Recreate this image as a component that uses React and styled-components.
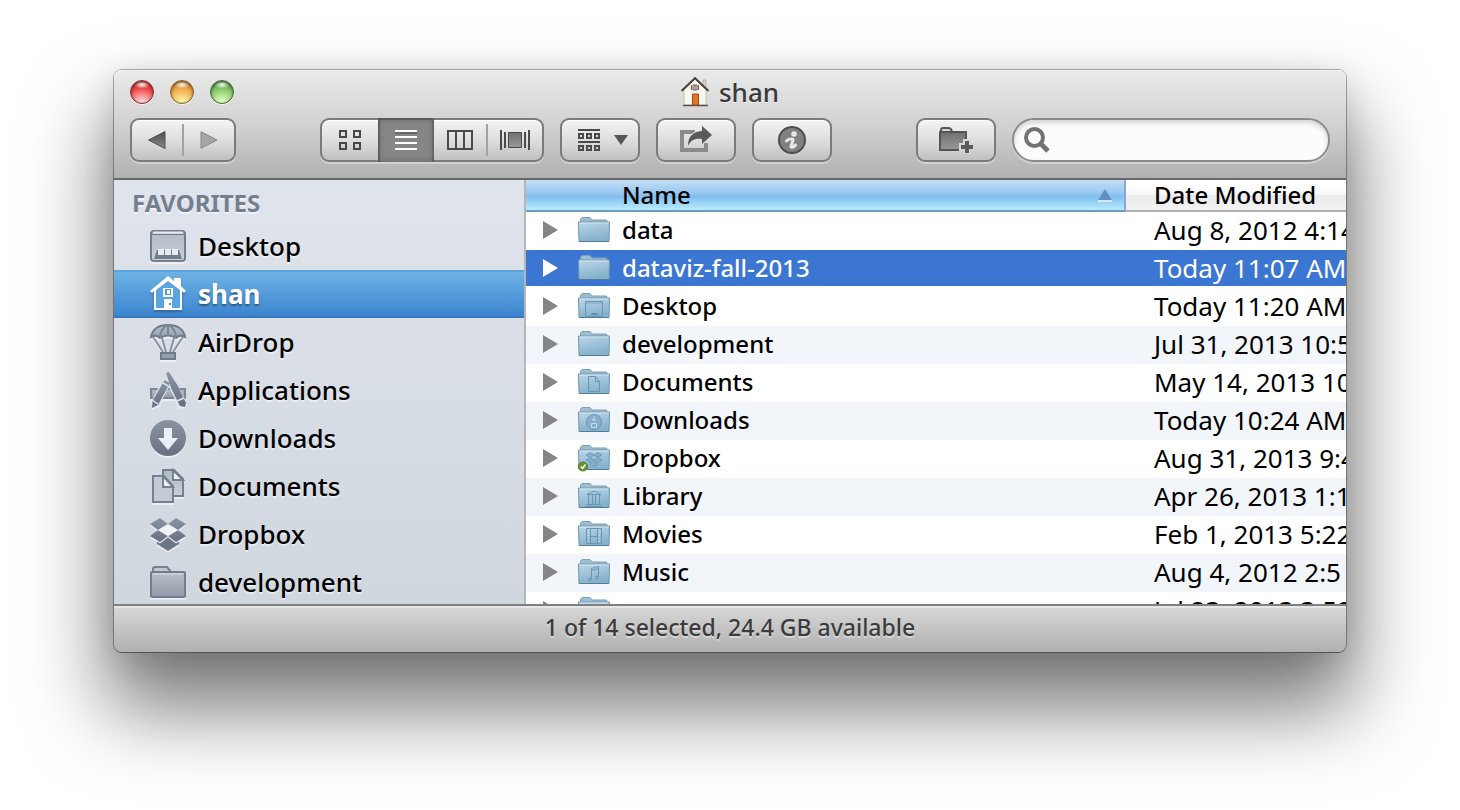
import React from "react";
import styled, { createGlobalStyle, css } from "styled-components";

const GlobalStyle = createGlobalStyle`
  *, *::before, *::after { box-sizing: border-box; }
  body {
    margin: 0;
    background: #fff;
    color: #000;
    font-family: "Noto Sans", "Open Sans", sans-serif;
    font-weight: 500;
  }
  button, input { font: inherit; color: inherit; }
  svg { display: block; flex: none; overflow: visible; }
`;

/* ---------- window ---------- */

const Desktop = styled.main`
  display: flex;
  flex-direction: column;
  height: 100vh;
  min-height: 480px;
  padding: 70px 114px 158px;
  overflow: hidden;
`;

const FinderWindow = styled.section`
  flex: 1;
  min-height: 0;
  display: flex;
  flex-direction: column;
  border-radius: 8px;
  box-shadow:
    0 0 0 1px rgba(0, 0, 0, 0.3),
    0 6px 30px rgba(0, 0, 0, 0.12),
    0 50px 80px 8px rgba(0, 0, 0, 0.52);
`;

const Header = styled.header`
  padding: 0 16px 16px;
  border-bottom: 2px solid #686868;
  border-radius: 8px 8px 0 0;
  background: linear-gradient(#eaeaea, #cfcfcf 55%, #b1b1b1);
  box-shadow: inset 0 1px 0 #f6f6f6;
`;

const TitleBar = styled.div`
  display: grid;
  grid-template-columns: 1fr auto 1fr;
  align-items: center;
  height: 44px;
  margin-bottom: 4px;
`;

const Lights = styled.div`
  display: flex;
  gap: 16px;
`;

const lightColors = {
  red: css`
    border-color: #8c2a2e;
    background: radial-gradient(ellipse 8px 4px at 50% 16%, #fff, transparent),
      radial-gradient(circle at 50% 105%, #ffd9d9 10%, #f04848 62%, #a5292d 100%);
  `,
  yellow: css`
    border-color: #8c6020;
    background: radial-gradient(ellipse 8px 4px at 50% 16%, #fff, transparent),
      radial-gradient(circle at 50% 105%, #fff7a8 10%, #f0a848 62%, #a86a20 100%);
  `,
  green: css`
    border-color: #3e6e2c;
    background: radial-gradient(ellipse 8px 4px at 50% 16%, #fff, transparent),
      radial-gradient(circle at 50% 105%, #e6ffc0 10%, #82c566 62%, #437c34 100%);
  `,
};

const Light = styled.button`
  width: 24px;
  height: 24px;
  padding: 0;
  border: 1px solid;
  border-radius: 50%;
  box-shadow: inset 0 1px 3px rgba(0, 0, 0, 0.5), 0 1px 0 rgba(255, 255, 255, 0.6);
  ${(p) => lightColors[p.$color]}
`;

const Title = styled.h1`
  display: flex;
  align-items: center;
  gap: 10px;
  margin: 0;
  font-size: 26px;
  line-height: 42px;
  font-weight: 500;
  color: #3a3a3a;
  text-shadow: 0 1px 0 rgba(255, 255, 255, 0.6);
`;

/* ---------- toolbar ---------- */

const Toolbar = styled.div`
  display: flex;
  align-items: center;
  gap: 16px;
`;

const Spacer = styled.div`
  flex: 1;
  margin: 0 -8px;
`;

const raised = css`
  height: 44px;
  border: 2px solid #7b7b7b;
  border-radius: 9px;
  background: linear-gradient(#f4f4f4, #dedede 50%, #c0c0c0);
  box-shadow: 0 2px 0 rgba(255, 255, 255, 0.35), inset 0 1px 0 #fff;
`;

const ButtonGroup = styled.div`
  ${raised}
  display: flex;
  align-items: center;
`;

const GroupButton = styled.button`
  display: flex;
  align-items: center;
  justify-content: center;
  width: ${(p) => p.$width}px;
  height: 40px;
  padding: 0;
  border: 0;
  background: none;
  ${(p) =>
    p.$active &&
    css`
      height: 44px;
      background: #868686;
      box-shadow: inset 0 0 6px rgba(0, 0, 0, 0.3), inset 2px 0 0 #6c6c6c,
        inset -2px 0 0 #747474, inset 0 2px 0 #666;
    `}
`;

const Divider = styled.span`
  width: 2px;
  height: 32px;
  background: #a2a2a2;
`;

const ToolButton = styled.button`
  ${raised}
  display: flex;
  align-items: center;
  justify-content: center;
  gap: 14px;
  width: 80px;
  padding: 0;
  ${(p) => p.$menu && css`padding-left: 6px;`}
`;

const SearchBox = styled.label`
  display: flex;
  align-items: center;
  gap: 8px;
  width: 318px;
  height: 44px;
  padding: 0 16px 0 10px;
  border: 2px solid #8b8b8b;
  border-radius: 22px;
  background: #fcfcfc;
  box-shadow: inset 0 3px 5px rgba(0, 0, 0, 0.16), 0 2px 0 rgba(255, 255, 255, 0.35);
`;

const SearchInput = styled.input`
  flex: 1;
  min-width: 0;
  height: 32px;
  padding: 0;
  border: 0;
  outline: 0;
  background: transparent;
  font-size: 24px;
`;

/* ---------- panes ---------- */

const Panes = styled.div`
  flex: 1;
  min-height: 0;
  display: grid;
  grid-template-columns: 412px minmax(0, 1fr);
  grid-template-rows: minmax(0, 1fr);
`;

const Sidebar = styled.nav`
  overflow: hidden;
  border-right: 2px solid #b4b6b9;
  background: linear-gradient(#e0e4ec, #d0d7df);
`;

const SidebarHeading = styled.h2`
  margin: 0;
  padding: 4px 18px 0;
  font-size: 24px;
  line-height: 38px;
  font-weight: 700;
  color: #73808f;
  text-shadow: 0 2px 0 rgba(255, 255, 255, 0.6);
`;

const PlaceList = styled.ul`
  margin: 0;
  padding: 0;
  list-style: none;
`;

const Place = styled.a`
  display: flex;
  align-items: center;
  gap: 12px;
  height: 48px;
  padding: 0 36px;
  font-size: 26px;
  line-height: 48px;
  color: #000;
  text-decoration: none;
  text-shadow: 0 2px 0 rgba(255, 255, 255, 0.5);
  svg { filter: drop-shadow(0 2px 0 rgba(255, 255, 255, 0.5)); }
  ${(p) =>
    p.$selected &&
    css`
      color: #fff;
      font-weight: 700;
      text-shadow: 0 2px 2px rgba(0, 0, 0, 0.4);
      background: linear-gradient(#70b4e6, #3a83cd);
      box-shadow: inset 0 2px 0 #5ba3dc, inset 0 -2px 0 #3778c0;
      svg { filter: drop-shadow(0 2px 1px rgba(0, 0, 0, 0.25)); }
    `}
`;

const ListPane = styled.div`
  overflow: hidden;
  background: #fff;
`;

const FileTable = styled.table`
  width: 100%;
  table-layout: fixed;
  border-collapse: separate;
  border-spacing: 0;
  font-size: 24px;
  line-height: 36px;
  white-space: nowrap;
`;

const HeadCell = styled.th`
  height: 32px;
  padding: 0 12px 0 28px;
  border-bottom: 2px solid #b0b0b0;
  background: linear-gradient(#fff 20%, #f6f6f6 48%, #ebebeb 50%, #f2f2f2);
  font-weight: 500;
  line-height: 30px;
  text-align: left;
  ${(p) =>
    p.$sorted &&
    css`
      padding-left: 96px;
      border-bottom-color: #6c9cba;
      border-right: 2px solid #8ba5dc;
      background: linear-gradient(#c5def5, #92c5f0 48%, #80bdf0 54%, #b9ecfd);
    `}
  ${(p) => p.$date && css`width: 220px;`}
`;

const HeadLabel = styled.div`
  display: flex;
  align-items: center;
  justify-content: space-between;
`;

const Cell = styled.td`
  padding: 0;
  border-bottom: 2px solid transparent;
`;

const DateCell = styled(Cell)`
  padding-left: 28px;
  overflow: hidden;
  font-size: 26px;
  font-weight: 400;
`;

const Row = styled.tr`
  height: 38px;
  &:nth-child(even) { background: #f2f6fb; }
  ${(p) =>
    p.$selected &&
    css`
      && { background: #3c76d3; }
      color: #fff;
      ${Cell} { border-bottom-color: #fff; }
    `}
`;

const NameLine = styled.div`
  display: flex;
  align-items: center;
  height: 36px;
  padding-left: 17px;
`;

const Disclosure = styled.button`
  margin: 0 20px 0 0;
  padding: 0;
  border: 0;
  background: none;
  color: ${(p) => (p.$selected ? "#fff" : "#858585")};
`;

const FileName = styled.span`
  margin-left: 12px;
  line-height: 38px;
`;

const StatusBar = styled.footer`
  height: 48px;
  padding-bottom: 4px;
  border-top: 2px solid #808080;
  border-radius: 0 0 8px 8px;
  background: linear-gradient(#d8d8d8, #b0b0b0);
  box-shadow: inset 0 2px 0 #e6e6e6, 0 1px 0 #555;
  font-size: 23px;
  line-height: 42px;
  text-align: center;
  color: #3c3c3c;
  text-shadow: 0 2px 0 rgba(255, 255, 255, 0.4);
`;

/* ---------- toolbar icons ---------- */

const Gradients = () => (
  <svg width="0" height="0" style={{ position: "absolute" }} aria-hidden="true">
    <defs>
      <linearGradient id="dark" x1="0" y1="0" x2="0" y2="1">
        <stop offset="0" stopColor="#4a4a4a" />
        <stop offset="1" stopColor="#8b8b8b" />
      </linearGradient>
      <linearGradient id="steel" x1="0" y1="0" x2="0" y2="1">
        <stop offset="0" stopColor="#707070" />
        <stop offset="1" stopColor="#989898" />
      </linearGradient>
      <linearGradient id="slate" x1="0" y1="0" x2="0" y2="1">
        <stop offset="0" stopColor="#8b95a2" />
        <stop offset="1" stopColor="#667080" />
      </linearGradient>
      <linearGradient id="slateFill" x1="0" y1="0" x2="0" y2="1">
        <stop offset="0" stopColor="#b9c0cb" />
        <stop offset="1" stopColor="#939ba8" />
      </linearGradient>
      <linearGradient id="paper" x1="0" y1="0" x2="0" y2="1">
        <stop offset="0" stopColor="#b2b9c4" />
        <stop offset="1" stopColor="#cbd1da" />
      </linearGradient>
      <linearGradient id="folder" x1="0" y1="0" x2="0.3" y2="1">
        <stop offset="0" stopColor="#bcd6e7" />
        <stop offset="1" stopColor="#84b1cc" />
      </linearGradient>
    </defs>
  </svg>
);

const HouseIcon = () => (
  <svg width="28" height="30" viewBox="0 0 28 30">
    <path d="M22 3h3v8l-3-3z" fill="#d8d4c8" stroke="#b5b2a6" />
    <path d="M3 12 14 2l11 10v16H3z" fill="#faf7ef" stroke="#c8c3b5" />
    <path d="M.5 14 14 1.200 27.500 14" fill="none" stroke="#4a4038" strokeWidth="2" />
    <path d="M2 28.500h25" stroke="#55504c" strokeWidth="1.500" />
    <path d="M11.500 17h6v11h-6z" fill="#e0762a" stroke="#a04c16" />
    <path d="M12 8h4v5h-4z" fill="#cfd9e2" stroke="#666" />
    <path d="M14 8v5" stroke="#666" />
    <path d="M10.500 8v5M17.500 8v5" stroke="#b13c2c" />
  </svg>
);

const BackIcon = () => (
  <svg width="18" height="18" viewBox="0 0 18 18">
    <path d="M.5 9 17 .5v17z" fill="url(#dark)" stroke="#505050" />
  </svg>
);

const ForwardIcon = () => (
  <svg width="18" height="18" viewBox="0 0 18 18">
    <path d="M17 9 1 .8v16.400z" fill="#a6a6a6" stroke="#858585" />
  </svg>
);

const IconViewIcon = () => (
  <svg width="22" height="20" viewBox="0 0 22 20" fill="none" stroke="#484848" strokeWidth="2">
    <path d="M1 1h6v6H1zM15 1h6v6h-6zM1 13h6v6H1zM15 13h6v6h-6z" />
  </svg>
);

const ListViewIcon = () => (
  <svg width="22" height="20" viewBox="0 0 22 20" stroke="#fff" strokeWidth="2">
    <path d="M0 3h22" stroke="#666" />
    <path d="M0 1h22M0 7h22M0 13h22M0 19h22" />
  </svg>
);

const ColumnViewIcon = () => (
  <svg width="26" height="20" viewBox="0 0 26 20" fill="none" stroke="#4a4a4a" strokeWidth="2">
    <path d="M1 1h24v18H1zM9 1v18M17 1v18" />
  </svg>
);

const CoverViewIcon = () => (
  <svg width="30" height="20" viewBox="0 0 30 20">
    <path d="M1 0v20M5 2v16M25 2v16M29 0v20" stroke="#4a4a4a" strokeWidth="2" />
    <path d="M8.500 2.500h13v15h-13z" fill="url(#steel)" stroke="#484848" />
  </svg>
);

const ArrangeIcon = () => (
  <svg width="22" height="22" viewBox="0 0 22 22" fill="none" stroke="#4a4a4a" strokeWidth="2">
    <path d="M0 1h22M0 13h22" />
    <path d="M1 5h4v4H1zM9 5h4v4H9zM17 5h4v4h-4zM1 17h4v4H1zM9 17h4v4H9zM17 17h4v4h-4z" />
  </svg>
);

const MenuArrowIcon = () => (
  <svg width="14" height="10" viewBox="0 0 14 10">
    <path d="M0 0h14L7 10z" fill="#555" />
  </svg>
);

const ShareIcon = () => (
  <svg width="32" height="28" viewBox="0 0 32 28">
    <path d="M15 6H2v18h24v-7" fill="none" stroke="#8b8b8b" strokeWidth="4" />
    <path
      d="M8 20C8 10 13 6 22 5V0l10 9-10 9v-5C15 12 11 14 8 20z"
      fill="#5a5a5a"
      stroke="#e2e2e2"
      strokeWidth="2"
      paintOrder="stroke"
    />
  </svg>
);

const InfoIcon = () => (
  <svg width="28" height="28" viewBox="0 0 28 28">
    <circle cx="14" cy="14" r="13" fill="#818181" stroke="#4e4e4e" strokeWidth="2" />
    <circle cx="16" cy="8" r="2.800" fill="#e8e8e8" />
    <path
      d="M8.500 15c2-2 5-2.500 6.500-1.500 0 2-2 5-2 7.500 1.500.8 3 0 4.500-2"
      fill="none"
      stroke="#e8e8e8"
      strokeWidth="3"
      strokeLinecap="round"
      strokeLinejoin="round"
    />
  </svg>
);

const NewFolderIcon = () => (
  <svg width="34" height="26" viewBox="0 0 34 26">
    <path d="M2 4c0-4 2-3 5-3s5-1 6 4" fill="#d5d5d5" stroke="#555" strokeWidth="2" />
    <path d="M1 5h26v18H1z" fill="url(#steel)" stroke="#555" strokeWidth="2" />
    <path d="M28 12v15M20 20h15" stroke="#d6d6d6" strokeWidth="8" />
    <path d="M28 14v12M22 20h12" stroke="#5c5c5c" strokeWidth="4" />
  </svg>
);

const SearchIcon = () => (
  <svg width="26" height="26" viewBox="0 0 26 26" fill="none" stroke="#737373">
    <circle cx="10.500" cy="10.500" r="8.500" strokeWidth="4" />
    <path d="m16.500 16.500 7.500 7.500" strokeWidth="5" />
  </svg>
);

const SortIcon = () => (
  <svg width="14" height="12" viewBox="0 0 14 12">
    <path d="M0 12h14" stroke="#d3ecff" strokeWidth="2" />
    <path d="M7 0l7 11H0z" fill="#5b90c8" />
  </svg>
);

const TriangleIcon = () => (
  <svg width="15" height="18" viewBox="0 0 15 18">
    <path d="M0 0l15 9-15 9z" fill="currentColor" />
  </svg>
);

/* ---------- sidebar icons ---------- */

const PlaceIcon = ({ children }) => (
  <svg width="36" height="36" viewBox="0 0 36 36" aria-hidden="true">
    {children}
  </svg>
);

const placeIcons = {
  desktop: (
    <PlaceIcon>
      <rect x="1" y="3" width="34" height="30" rx="3" fill="url(#paper)" stroke="#727e8e" strokeWidth="2" />
      <path d="M2 6.500h32" stroke="#727e8e" />
      <path d="M3 4.500h30" stroke="#e9edf2" strokeWidth="2" />
      <path d="M7 22h22l3 9H4z" fill="#717c8b" />
      <path d="M8 21h6v6H8zM15 21h6v6h-6zM22 21h6v6h-6z" fill="#e9ecf1" />
    </PlaceIcon>
  ),
  home: (
    <PlaceIcon>
      <path d="M0 15 18 0l6 5V2h7v8l5 5-2 2-2-2v19H4V15l-2 2z" fill="#fff" />
      <path d="M6 14 18 5l12 9v18h-8v-9h-8v9H6z" fill="#5ba5df" />
      <path d="M13 12h10v9H13z" fill="#fff" />
      <path d="M15 13h6v6h-6z" fill="#4f98d8" />
      <path d="M17 14h3v4h-3z" fill="#fff" />
      <path d="M14 23h8v11h-8z" fill="#fff" />
      <path d="M19 27h2v2h-2z" fill="#4a94d6" />
    </PlaceIcon>
  ),
  airdrop: (
    <PlaceIcon>
      <path d="M3 13 13 28M33 13 23 28M12 14l4 14M24 14l-4 14" fill="none" stroke="#87919e" strokeWidth="2" />
      <path
        d="M1 13C2 5 9 1 18 1s16 4 17 12c-3-2-6-2-9 1-5-3-11-3-16 0-3-3-6-3-9-1z"
        fill="url(#slateFill)"
        stroke="#6e7988"
        strokeWidth="2"
      />
      <path d="M10 14C10 7 13 3 18 1c5 2 8 6 8 13M18 1v11" fill="none" stroke="#7b8593" strokeWidth="2" />
      <path d="M11 29h14v6H11z" fill="#97a0ad" stroke="#6e7988" strokeWidth="2" />
    </PlaceIcon>
  ),
  applications: (
    <PlaceIcon>
      <path d="M1 17h34v9H1z" fill="url(#slateFill)" stroke="#7b8593" strokeWidth="2" />
      <path d="M18 4 33 33M17 9 5 32" stroke="#dde2e9" strokeWidth="9" />
      <path d="m14.500 8 5.500 3L8 33l-6 3 .5-7z" fill="url(#slate)" />
      <path d="M16 1l3-1 9 14 8 17-1 4-5-1-9-18z" fill="url(#slate)" />
      <path d="m2 28 6 4M13 11l5 3M27 29l7-3" stroke="#e3e7ed" strokeWidth="1.500" />
    </PlaceIcon>
  ),
  downloads: (
    <PlaceIcon>
      <circle cx="18" cy="18" r="18" fill="url(#slate)" />
      <path d="M14 8h8v10h6L18 30 8 18h6z" fill="#eceff3" />
    </PlaceIcon>
  ),
  documents: (
    <PlaceIcon>
      <path d="M13 2h11l9 9v17H13z" fill="url(#paper)" stroke="#76818f" strokeWidth="2" />
      <path d="M23 2v10h10z" fill="#f0f2f5" stroke="#76818f" strokeWidth="2" />
      <path d="M3 8h11l9 10v16H3z" fill="#c5cbd4" stroke="#76818f" strokeWidth="2" />
      <path d="M13 8v11h10z" fill="#f0f2f5" stroke="#76818f" strokeWidth="2" />
    </PlaceIcon>
  ),
  dropbox: (
    <PlaceIcon>
      <path d="M10 2 18 8 8 14 0 8zM26 2 18 8l10 6 8-6zM8 14l10 6-8 6-10-6zM28 14l-10 6 8 6 10-6z" fill="url(#slate)" />
      <path d="M7 25.500 10 27.500 18 21.500 26 27.500 29 25.500V28L18 35 7 28z" fill="#6b7685" />
      <path d="m18 8 10 6-10 6-10-6z" fill="#eef1f5" />
    </PlaceIcon>
  ),
  folder: (
    <PlaceIcon>
      <path d="M3 9V5c0-2 1-2 2-2h12l5 6" fill="#c3c9d3" stroke="#76818f" strokeWidth="2" />
      <rect x="1" y="8" width="34" height="25" rx="1" fill="url(#slateFill)" stroke="#737e8d" strokeWidth="2" />
      <path d="M3 10h30" stroke="#cbd1da" strokeWidth="2" />
    </PlaceIcon>
  ),
};

/* ---------- file list icons ---------- */

const emblems = {
  desktop: (
    <g>
      <path d="M7.500 8.500h17v15h-17z" />
      <path d="M8 10h16" stroke="#7ea8c4" />
      <path d="M12 22l2-2h5l2 2z" fill="#5e8fb3" stroke="none" />
    </g>
  ),
  documents: <path d="M10.500 7.500h7l4 5v10h-11zM17.500 7.500v5h4" />,
  downloads: (
    <g>
      <circle cx="16" cy="15" r="7.500" fill="#86aecb" />
      <path d="M16 9v5M14 12l2 2 2-2M13.500 16.500h5v4h-5z" stroke="#c3dcec" />
    </g>
  ),
  dropbox: (
    <g>
      <path
        d="M12 7.500l4 2.500-4 2.500L8 10zM20 7.500l4 2.500-4 2.500-4-2.500zM12 12.500l4 2.500-4 2.500L8 15zM20 12.500l4 2.500-4 2.500-4-2.500zM12 19l4-2 4 2-4 3z"
        fill="#86afcb"
        stroke="#709cba"
      />
      <circle cx="5" cy="21.500" r="4.500" fill="#6b9430" stroke="#557722" />
      <path d="M3 21.500l1.500 2 3-4" stroke="#fff" strokeWidth="1.500" />
    </g>
  ),
  library: (
    <path d="M9 11.500h14L16 8zM10.500 12v9M14.500 12v9M17.500 12v9M21.500 12v9M9 21.500h14M7 23.500h18" />
  ),
  movies: (
    <g>
      <path d="M8.500 7.500h15v15h-15zM12.500 7.500v15M19.500 7.500v15M12.500 15.500h7" />
      <path d="M10.500 8v14M21.500 8v14" stroke="#d0e3ef" strokeDasharray="1 2" />
    </g>
  ),
  music: (
    <g>
      <path d="M13.500 20V9.500l7-2V18M13.500 11.500l7-2" />
      <circle cx="12" cy="20.500" r="1.500" fill="#86aecb" />
      <circle cx="19" cy="18.500" r="1.500" fill="#86aecb" />
    </g>
  ),
};

const FolderIcon = ({ emblem }) => (
  <svg width="32" height="26" viewBox="0 0 32 26" aria-hidden="true">
    <path d="M2.500 5V2L4 .5h8L14 3h14.500l1 2.500" fill="#9fbdd1" stroke="#7f9fb5" />
    <path d="M.5 5h31l-.5 19.500H1z" fill="url(#folder)" stroke="#6f96af" />
    <path d="M1.500 6h29" stroke="#d3e5f0" />
    <path d="M1 24.500h30" stroke="#527d98" />
    <g fill="none" stroke="#6896b6">{emblems[emblem]}</g>
  </svg>
);

/* ---------- data ---------- */

const places = [
  { name: "Desktop", icon: "desktop" },
  { name: "shan", icon: "home", selected: true },
  { name: "AirDrop", icon: "airdrop" },
  { name: "Applications", icon: "applications" },
  { name: "Downloads", icon: "downloads" },
  { name: "Documents", icon: "documents" },
  { name: "Dropbox", icon: "dropbox" },
  { name: "development", icon: "folder" },
];

const files = [
  { name: "data", date: "Aug 8, 2012 4:14" },
  { name: "dataviz-fall-2013", date: "Today 11:07 AM", selected: true },
  { name: "Desktop", date: "Today 11:20 AM", emblem: "desktop" },
  { name: "development", date: "Jul 31, 2013 10:5" },
  { name: "Documents", date: "May 14, 2013 10", emblem: "documents" },
  { name: "Downloads", date: "Today 10:24 AM", emblem: "downloads" },
  { name: "Dropbox", date: "Aug 31, 2013 9:4", emblem: "dropbox" },
  { name: "Library", date: "Apr 26, 2013 1:1", emblem: "library" },
  { name: "Movies", date: "Feb 1, 2013 5:22", emblem: "movies" },
  { name: "Music", date: "Aug 4, 2012 2:5", emblem: "music" },
  { name: "papers", date: "Jul 23, 2013 3:59" },
];

export default function App() {
  return (
    <Desktop>
      <GlobalStyle />
      <Gradients />
      <FinderWindow aria-label="shan">
        <Header>
          <TitleBar>
            <Lights>
              <Light type="button" $color="red" aria-label="Close" />
              <Light type="button" $color="yellow" aria-label="Minimize" />
              <Light type="button" $color="green" aria-label="Zoom" />
            </Lights>
            <Title>
              <HouseIcon />
              shan
            </Title>
          </TitleBar>
          <Toolbar>
            <ButtonGroup>
              <GroupButton type="button" $width={50} aria-label="Back"><BackIcon /></GroupButton>
              <Divider />
              <GroupButton type="button" $width={50} aria-label="Forward"><ForwardIcon /></GroupButton>
            </ButtonGroup>
            <Spacer />
            <ButtonGroup>
              <GroupButton type="button" $width={56} aria-label="Icon view"><IconViewIcon /></GroupButton>
              <GroupButton type="button" $width={56} $active aria-pressed="true" aria-label="List view"><ListViewIcon /></GroupButton>
              <GroupButton type="button" $width={52} aria-label="Column view"><ColumnViewIcon /></GroupButton>
              <Divider />
              <GroupButton type="button" $width={54} aria-label="Cover Flow view"><CoverViewIcon /></GroupButton>
            </ButtonGroup>
            <ToolButton type="button" $menu aria-haspopup="menu" aria-label="Arrange by">
              <ArrangeIcon />
              <MenuArrowIcon />
            </ToolButton>
            <ToolButton type="button" aria-label="Share"><ShareIcon /></ToolButton>
            <ToolButton type="button" aria-label="Get info"><InfoIcon /></ToolButton>
            <Spacer />
            <ToolButton type="button" aria-label="New folder"><NewFolderIcon /></ToolButton>
            <SearchBox>
              <SearchIcon />
              <SearchInput type="text" aria-label="Search" />
            </SearchBox>
          </Toolbar>
        </Header>

        <Panes>
          <Sidebar>
            <SidebarHeading>FAVORITES</SidebarHeading>
            <PlaceList>
              {places.map((place) => (
                <li key={place.name}>
                  <Place href={"#" + place.name} $selected={place.selected}>
                    {placeIcons[place.icon]}
                    {place.name}
                  </Place>
                </li>
              ))}
            </PlaceList>
          </Sidebar>
          <ListPane>
            <FileTable>
              <thead>
                <tr>
                  <HeadCell scope="col" $sorted aria-sort="ascending">
                    <HeadLabel>
                      Name
                      <SortIcon />
                    </HeadLabel>
                  </HeadCell>
                  <HeadCell scope="col" $date>Date Modified</HeadCell>
                </tr>
              </thead>
              <tbody>
                {files.map((file) => (
                  <Row key={file.name} $selected={file.selected}>
                    <Cell>
                      <NameLine>
                        <Disclosure type="button" $selected={file.selected} aria-label={"Expand " + file.name}>
                          <TriangleIcon />
                        </Disclosure>
                        <FolderIcon emblem={file.emblem} />
                        <FileName>{file.name}</FileName>
                      </NameLine>
                    </Cell>
                    <DateCell>{file.date}</DateCell>
                  </Row>
                ))}
              </tbody>
            </FileTable>
          </ListPane>
        </Panes>

        <StatusBar>1 of 14 selected, 24.4 GB available</StatusBar>
      </FinderWindow>
    </Desktop>
  );
}
